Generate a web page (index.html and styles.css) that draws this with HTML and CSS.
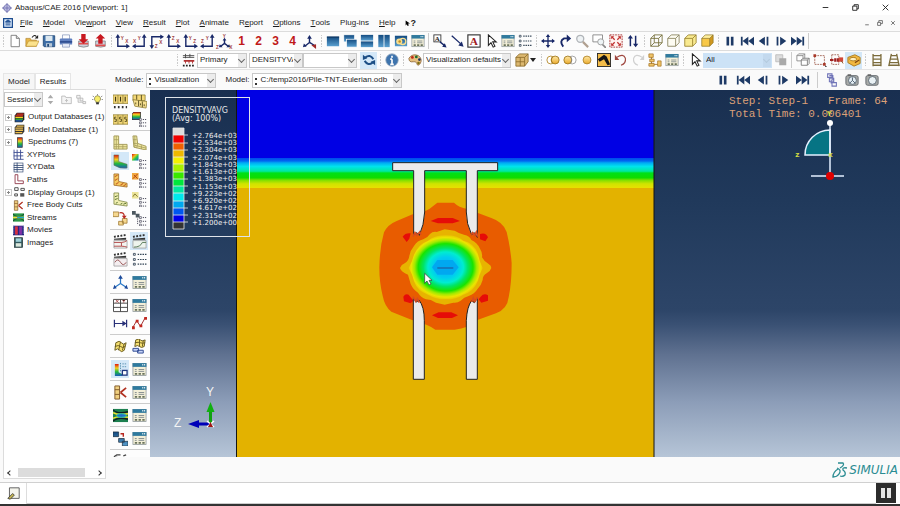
FILE: index.html
```html
<!DOCTYPE html>
<html lang="en">
<head>
<meta charset="utf-8">
<title>Abaqus/CAE 2016 [Viewport: 1]</title>
<link rel="stylesheet" href="styles.css">
</head>
<body>
<svg class="defs" aria-hidden="true">
<defs>
<linearGradient id="win" x1="0" y1="0" x2="0" y2="1"><stop offset="0" stop-color="#124a80"/><stop offset="1" stop-color="#5aa0d0"/></linearGradient>
<linearGradient id="rain" x1="0" y1="0" x2="0" y2="1"><stop offset="0" stop-color="#e01010"/><stop offset=".35" stop-color="#f0d020"/><stop offset=".65" stop-color="#20b840"/><stop offset="1" stop-color="#1858c0"/></linearGradient>
<linearGradient id="rainx" x1="0" y1="0" x2="1" y2="1"><stop offset="0" stop-color="#e01010"/><stop offset=".35" stop-color="#f0c020"/><stop offset=".6" stop-color="#20c850"/><stop offset="1" stop-color="#1868d0"/></linearGradient>
<linearGradient id="gold" x1="0" y1="0" x2="0" y2="1"><stop offset="0" stop-color="#ffe9a8"/><stop offset="1" stop-color="#e9a92a"/></linearGradient>
</defs>
<symbol id="app" viewBox="0 0 16 16"><path d="M8 1l3 3v1h1l3 3-3 3h-1v1l-3 3-3-3v-1H4L1 8l3-3h1V4z" fill="#c8c8e8" stroke="#5a5aa0" stroke-width="1.3"/><path d="M1 8h14M8 1v14" stroke="#7070b0" stroke-width="1.5"/></symbol>
<symbol id="mdi" viewBox="0 0 16 16"><rect x="1" y="1" width="14" height="14" fill="#dceafa" stroke="#1c4c90" stroke-width="2"/><path d="M4 6l4-3 4 3zM4 11h8M4 8h8" fill="#1c4c90" stroke="#1c4c90" stroke-width="1.6"/></symbol>
<symbol id="new" viewBox="0 0 16 16"><path d="M3.500 1.500h6l3.500 3.500v9.500h-9.500z" fill="#fff" stroke="#777"/><path d="M9.500 1.500v3.500h3.500" fill="#ddd" stroke="#777"/></symbol>
<symbol id="open" viewBox="0 0 16 16"><path d="M1 14V5h5l1 2h6v7z" fill="#e8b848" stroke="#a87820" stroke-width=".7"/><path d="M1 14l3-6h12l-3 6z" fill="#fbe28c" stroke="#b88a28" stroke-width=".7"/><path d="M8 4q3-4 5-1" fill="none" stroke="#222" stroke-width="1.200"/><path d="M15 1v4h-4z" fill="#222"/></symbol>
<symbol id="save" viewBox="0 0 16 16"><path d="M1.500 2h13v12.500h-12l-1-1z" fill="#3e6ea6" stroke="#234a78"/><path d="M4 2h8v6H4z" fill="#dce8f0"/><path d="M4.500 10.500h7v4h-7z" fill="#b8c8d8"/><path d="M6 11.500h2v3H6z" fill="#234a78"/></symbol>
<symbol id="print" viewBox="0 0 16 16"><path d="M4 1h8v5H4z" fill="#fff" stroke="#8090b8" stroke-width=".8"/><path d="M1 6q0-1 1-1h12q1 0 1 1v6H1z" fill="#6080c0"/><path d="M1 8h14v2H1z" fill="#304f92"/><path d="M4 11h8v4H4z" fill="#e8ecf8" stroke="#8090b8" stroke-width=".8"/></symbol>
<symbol id="dbin" viewBox="0 0 16 16"><path d="M3 8h11v6q-5 2-11 0z" fill="#ccd2dc" stroke="#777" stroke-width=".8"/><path d="M3 11h11" stroke="#e05050" stroke-width="2"/><path d="M6 0h5v6h3l-5.500 5L3 6h3z" fill="#c81820"/></symbol>
<symbol id="dbout" viewBox="0 0 16 16"><path d="M3 8h11v6q-5 2-11 0z" fill="#ccd2dc" stroke="#777" stroke-width=".8"/><path d="M3 13h11" stroke="#e05050" stroke-width="2"/><path d="M6 11h5V5h3L8.500 0 3 5h3z" fill="#c81820"/></symbol>
<symbol id="w1" viewBox="0 0 16 16"><rect x="1" y="3" width="14" height="11" fill="url(#win)"/><path d="M1 3.500h14" stroke="#0c2f58"/></symbol>
<symbol id="w2" viewBox="0 0 16 16"><rect x="1" y="1" width="12" height="8" fill="url(#win)" stroke="#fff" stroke-width=".6"/><rect x="4" y="6" width="12" height="9" fill="url(#win)" stroke="#fff" stroke-width=".8"/></symbol>
<symbol id="w3" viewBox="0 0 16 16"><rect x="1" y="1" width="14" height="6.500" fill="url(#win)"/><rect x="1" y="8.500" width="14" height="6.500" fill="url(#win)"/></symbol>
<symbol id="w4" viewBox="0 0 16 16"><rect x="1.500" y="1" width="6" height="14" fill="url(#win)"/><rect x="8.500" y="1" width="6" height="14" fill="url(#win)"/></symbol>
<symbol id="w5" viewBox="0 0 16 16"><rect x="1" y="2" width="14" height="12" fill="url(#win)"/><circle cx="6" cy="8.500" r="3.500" fill="#f8df90"/><circle cx="10" cy="8.500" r="3.500" fill="none" stroke="#f8df90" stroke-width="1.500"/><circle cx="6.500" cy="8.500" r="1.500" fill="#c89020"/></symbol>
<symbol id="dlg" viewBox="0 0 16 16"><rect x="1" y="1.500" width="14" height="13" fill="#f3efd8" stroke="#8a9498" stroke-width=".8"/><path d="M.600 1.200h14.800v4H.600z" fill="#2f7a9e"/><path d="M11 3h1M13 3h1" stroke="#fff" stroke-width="1.500"/><path d="M3 8h2M7 8h6M3 10h2M7 10h6" stroke="#858e90" stroke-width="1"/><path d="M3 12.700h2.500M7 12.700h2.500M11 12.700h2.500" stroke="#6a735a" stroke-width="1.800"/></symbol>
<symbol id="arr" viewBox="0 0 16 16"><path d="M2 2l10 9" stroke="#182868" stroke-width="1.500"/><path d="M15.500 14.500l-6-1.500 4-4.500z" fill="#182868"/></symbol>
<symbol id="cur" viewBox="0 0 16 16"><path d="M5 1v12l3-3 2.500 5 2-1-2.500-5h4z" fill="#fff" stroke="#222" stroke-width="1.200"/></symbol>
<symbol id="list" viewBox="0 0 16 16"><path d="M1.500 1.500h2v2h-2zM1.500 7h2v2h-2zM1.500 12h2v2h-2z" fill="#fff" stroke="#345" stroke-width=".9"/><path d="M6 2.500h10M6 8h10M6 13h10" stroke="#345" stroke-width="1.300" stroke-dasharray="1.600 1"/></symbol>
<symbol id="pan" viewBox="0 0 16 16"><path d="M8 2v12M2 8h12" stroke="#182868" stroke-width="1.500"/><path d="M8 0l2.500 3.500h-5zM8 16l2.500-3.500h-5zM0 8l3.500-2.500v5zM16 8l-3.500-2.500v5z" fill="#182868"/></symbol>
<symbol id="rot" viewBox="0 0 16 16"><path d="M6 14.500Q1 8 7 5h4" fill="none" stroke="#182868" stroke-width="2.200"/><path d="M10 .5l5 4.500-5 4.500z" fill="#182868"/></symbol>
<symbol id="mag" viewBox="0 0 16 16"><circle cx="6" cy="5.500" r="4" fill="#eef2f4" stroke="#b0b4b8" stroke-width="1.500"/><path d="M9 9l6 6" stroke="#b0a090" stroke-width="2.500"/></symbol>
<symbol id="zbox" viewBox="0 0 16 16"><path d="M1 1h11v8H1z" fill="#fff" stroke="#777" stroke-width=".9"/><circle cx="10" cy="9" r="3.500" fill="#eef4f6" stroke="#999"/><path d="M12 12l4 4" stroke="#888" stroke-width="2"/></symbol>
<symbol id="fit" viewBox="0 0 16 16"><rect x="1" y="1" width="14" height="14" fill="#fff3f0" stroke="#a02828" stroke-dasharray="2 1"/><path d="M3 3l3.500 3.500M13 3L9.500 6.500M3 13l3.500-3.500M13 13L9.500 9.500" stroke="#c03030" stroke-width="1.500"/><path d="M2.500 2.500h3.500l-3.500 3.500zM13.500 2.500H10l3.500 3.500zM2.500 13.500h3.500L2.500 10zM13.500 13.500H10l3.500-3.500z" fill="#c03030"/></symbol>
<symbol id="updn" viewBox="0 0 16 16"><path d="M5 4v10M11 2v10" stroke="#182868" stroke-width="1.700"/><path d="M2 5l3-4 3 4zM8 11l3 4 3-4z" fill="#182868"/></symbol>
<symbol id="cwire" viewBox="0 0 16 16"><path d="M2 5h9v9H2zM6 1h9v9H6zM2 5l4-4M11 5l4-4M2 14l4-4M11 14l4-4" fill="none" stroke="#76703c"/></symbol>
<symbol id="chid" viewBox="0 0 16 16"><path d="M2 5h9v9H2zM2 5l4-4h9v9l-4 4M11 5l4-4" fill="#fdfcf2" stroke="#8a8560"/></symbol>
<symbol id="cfill" viewBox="0 0 16 16"><path d="M2 5l4-4h9v9l-4 4H2z" fill="#f9ea90"/><path d="M2 5h9v9H2zM2 5l4-4h9v9l-4 4M11 5l4-4" fill="none" stroke="#998430"/></symbol>
<symbol id="cshade" viewBox="0 0 16 16"><path d="M2 5l4-4h9l-4 4z" fill="#fff0a0"/><path d="M2 5h9v9H2z" fill="#f8c848"/><path d="M11 5l4-4v9l-4 4z" fill="#d09820"/><path d="M2 5h9v9H2zM2 5l4-4h9v9l-4 4M11 5l4-4" fill="none" stroke="#8d7420" stroke-width=".8"/></symbol>
<symbol id="pause" viewBox="0 0 16 16"><path d="M4 3h3v10H4zM9 3h3v10H9z" fill="#1e3a66"/></symbol>
<symbol id="first" viewBox="0 0 16 16"><path d="M1 3h2v10H1zM9.500 3v10L3 8zM16 3v10L9.500 8z" fill="#1e3a66"/></symbol>
<symbol id="prev" viewBox="0 0 16 16"><path d="M9 3v10L2 8zM11 3h2v10h-2z" fill="#1e3a66"/></symbol>
<symbol id="next" viewBox="0 0 16 16"><path d="M3 3h2v10H3zM7 3l7 5-7 5z" fill="#1e3a66"/></symbol>
<symbol id="last" viewBox="0 0 16 16"><path d="M13 3h2v10h-2zM0 3l6.500 5L0 13zM6.500 3L13 8l-6.500 5z" fill="#1e3a66"/></symbol>
<symbol id="field" viewBox="0 0 16 16"><path d="M1 3h13M1 5h13" stroke="#444"/><path d="M4 1v5M9 1v4" stroke="#444"/><path d="M2 9h12" stroke="#b03030" stroke-width="2"/><path d="M4 9v3M8 9v3M12 9v3" stroke="#b03030"/><path d="M1 14.500h14" stroke="#222" stroke-width="2" stroke-dasharray="2 1.500"/></symbol>
<symbol id="sync" viewBox="0 0 16 16"><path d="M13 7Q9 1 4 5M3 9q4 6 9 2" fill="none" stroke="#1d4f86" stroke-width="2.300"/><path d="M1 8V2l5 4zM15 8v6l-5-4z" fill="#1d4f86"/></symbol>
<symbol id="info" viewBox="0 0 16 16"><circle cx="8" cy="8" r="7" fill="#3e74ae" stroke="#7892b0"/><path d="M8 3v2.500M8 7v6M6 7h2M6 13h4" stroke="#fff" stroke-width="1.900"/></symbol>
<symbol id="pal" viewBox="0 0 16 16"><path d="M1 6q4-6 11-3 5 4 2 9-3 4-4 0-1-3-4-2Q1 11 1 6z" fill="#e6c080" stroke="#805828" stroke-width=".8"/><circle cx="5" cy="5" r="1.600" fill="#c02818"/><circle cx="9.500" cy="4.500" r="1.600" fill="#1c7030"/><circle cx="13" cy="7.500" r="1.500" fill="#203060"/><circle cx="12" cy="11.500" r="1.500" fill="#807010"/></symbol>
<symbol id="cube" viewBox="0 0 16 16"><path d="M1 5l4-4h10v9l-4 5H1z" fill="#dcb870"/><path d="M1 5h10v10H1zM1 5l4-4h10v9l-4 5M11 5l4-4M6 5v10M1 10h10" fill="none" stroke="#886828" stroke-width=".9"/></symbol>
<symbol id="dg1" viewBox="0 0 16 16"><circle cx="5.500" cy="8" r="4.500" fill="#fff" stroke="#b48828"/><circle cx="10.500" cy="8" r="4.500" fill="url(#gold)" stroke="#a07820"/><path d="M8 4a5 5 0 0 0 0 8" fill="none" stroke="#a07820"/></symbol>
<symbol id="dg2" viewBox="0 0 16 16"><circle cx="10.500" cy="8" r="4.500" fill="#fff" stroke="#999"/><circle cx="5.500" cy="8" r="4.500" fill="url(#gold)" stroke="#a07820"/><path d="M8 4a5 5 0 0 1 0 8" fill="none" stroke="#888"/></symbol>
<symbol id="dg3" viewBox="0 0 16 16"><circle cx="8" cy="8" r="4.500" fill="url(#gold)" stroke="#b08428"/></symbol>
<symbol id="dg4" viewBox="0 0 16 16"><rect x=".5" y=".5" width="15" height="15" fill="#f4bc48" stroke="#222"/><path d="M1 7l7-5 3 2 4 9-3 1-4-7-5 3z" fill="#151515"/></symbol>
<symbol id="undo" viewBox="0 0 16 16"><path d="M3 5q8-5 10 1 1 6-5 8" fill="none" stroke="#a04840" stroke-width="1.300"/><path d="M1 2v6h5z" fill="#a04840"/></symbol>
<symbol id="redo" viewBox="0 0 16 16"><path d="M13 5Q5 0 3 6q-1 6 5 8" fill="none" stroke="#d0d0d0" stroke-width="1.300"/><path d="M15 2v6h-5z" fill="#d0d0d0"/></symbol>
<symbol id="tree" viewBox="0 0 16 16"><path d="M4 3v10h8M4 8h3" fill="none" stroke="#a07020"/><path d="M1 1h5v4H1zM2 7h5v3H2zM1 12h6v3H1zM11 9h4v6h-4z" fill="#f0c468" stroke="#a07020" stroke-width=".8"/></symbol>
<symbol id="grey" viewBox="0 0 16 16"><path d="M2 2h8v8H2z" fill="#ddd" stroke="#bbb"/><path d="M6 6h8v8H6z" fill="#aaa"/></symbol>
<symbol id="cubes" viewBox="0 0 16 16"><path d="M1 3h7v6H1zM1 3l2-2h7v6L8 9M8 3l2-2" fill="#fff" stroke="#888"/><path d="M6 8h7v6H6zM6 8l2-2h7v6l-2 2M13 8l2-2" fill="#fff" stroke="#777"/></symbol>
<symbol id="sel" viewBox="0 0 16 16"><rect x="2" y="3" width="11" height="10" fill="none" stroke="#a06050" stroke-dasharray="2 1"/><path d="M.5 1.500h3v3h-3zM11.500 11.500h3v3h-3z" fill="#a83828"/><path d="M16 16h-2v-2" fill="#222"/></symbol>
<symbol id="sel2" viewBox="0 0 16 16"><rect x="2" y="2" width="8" height="11" fill="none" stroke="#a06050" stroke-dasharray="2 1"/><path d="M0 8h4M6 6v4M9 6v4" stroke="#a02020" stroke-width="2.500"/><path d="M10 5h5v5h-5z" fill="#d04838"/><path d="M13 9l2 3" stroke="#805020"/></symbol>
<symbol id="ring" viewBox="0 0 16 16"><path d="M1 5l8-3 6 3v7l-7 3-7-4z" fill="#f1b840" stroke="#a87818"/><ellipse cx="7" cy="7" rx="4" ry="2" fill="#fff0c0" stroke="#a87818"/><path d="M9 11l5-3" stroke="#804810" stroke-width="1.500"/></symbol>
<symbol id="lad" viewBox="0 0 16 16"><path d="M3.500 1v14M12.500 1v14M3 3h10M3 7h10M3 11h10M3 14h10" stroke="#7c6c3c" stroke-width="1.500"/></symbol>
<symbol id="lad2" viewBox="0 0 16 16"><path d="M5 1L2 15M11 1l3 14M5 3h6M4 7h8M3 11h10M2 14h12" stroke="#7c6c3c" stroke-width="1.500"/></symbol>
<symbol id="link" viewBox="0 0 16 16"><path d="M3 1h5v4H3zM5 6h5v4H5zM8 11h5v4H8zM5 3h4v5H7v4" fill="none" stroke="#7074b8" stroke-width="1.200"/></symbol>
<symbol id="cam" viewBox="0 0 16 16"><rect x="1" y="3" width="14" height="11" rx="2" fill="#a8aaa8" stroke="#5c6268"/><path d="M3 1.500h4V3H3z" fill="#555"/><circle cx="8.500" cy="8.500" r="4.500" fill="#e4eef4" stroke="#52606c"/><path d="M8.500 5v3.500l-3 3M8.500 8.500l3 3" stroke="#456" fill="none"/></symbol>
<symbol id="cam2" viewBox="0 0 16 16"><rect x="1" y="3" width="14" height="11" rx="2" fill="#a8aaa8" stroke="#5c6268"/><path d="M3 1.500h4V3H3z" fill="#555"/><circle cx="8.500" cy="8.500" r="4.500" fill="#e9f1f4" stroke="#52606c"/></symbol>
<symbol id="fold" viewBox="0 0 16 16"><path d="M1 3h5l1 2h8v9H1z" fill="#f4f4f4" stroke="#aaa"/><path d="M8 12V8l-2 2M8 8l2 2" fill="none" stroke="#aaa"/></symbol>
<symbol id="tgrey" viewBox="0 0 16 16"><path d="M1 2h5v4H1zM6 6h4v4H6zM10 11h4v3h-4zM3 6v6h7" fill="#f4f4f4" stroke="#aaa"/></symbol>
<symbol id="bulb" viewBox="0 0 16 16"><path d="M8 0v2M1 3l2 1M15 3l-2 1M0 8h2M16 8h-2" stroke="#666"/><path d="M8 2.500a4.500 4.500 0 0 1 2.500 8.200V12h-5v-1.300A4.500 4.500 0 0 1 8 2.500z" fill="#f7ee6c" stroke="#77703a"/><path d="M6 12h4v3H6z" fill="#333"/></symbol>
<symbol id="odb" viewBox="0 0 16 16"><path d="M1 5l3-4h11v10l-3 4H1z" fill="#222"/><path d="M4 3h10M2 5.500h11" stroke="#e03020" stroke-width="1.800"/><path d="M2 8h11" stroke="#f0d820" stroke-width="1.800"/><path d="M2 10.500h11" stroke="#30b840" stroke-width="1.800"/><path d="M2 13h10" stroke="#2070d8" stroke-width="1.600"/></symbol>
<symbol id="mdb" viewBox="0 0 16 16"><path d="M1 5l3-4h11v10l-3 4H1z" fill="#333"/><path d="M4 3h10M2 6h11M2 9h11M2 12.500h10" stroke="#f0c050" stroke-width="2"/></symbol>
<symbol id="spec" viewBox="0 0 16 16"><rect x="5" y="1" width="7" height="14" fill="url(#rain)" stroke="#333"/></symbol>
<symbol id="xyp" viewBox="0 0 16 16"><path d="M1.500 1v14h14M6 1v14M11 1v14M1 5h14M1 10h14" fill="none" stroke="#3a4a90" stroke-width="1.300"/></symbol>
<symbol id="xyd" viewBox="0 0 16 16"><rect x="1.500" y="1.500" width="13" height="13" fill="#fff" stroke="#3a5078"/><path d="M1 5h14M1 8h14M1 11h14M6 1v14" stroke="#3a5078" stroke-width="1.300"/></symbol>
<symbol id="path" viewBox="0 0 16 16"><path d="M3 1h4v9h8v4H3z" fill="#fff" stroke="#903848" stroke-width="1.300"/></symbol>
<symbol id="dgr" viewBox="0 0 16 16"><path d="M1 1h5v4H1zM10 2h5v3h-5zM1 10h4v3H1z" fill="#fff" stroke="#444" stroke-width="1.300"/><path d="M9 9h6v5H9z" fill="#555"/></symbol>
<symbol id="fbc" viewBox="0 0 16 16"><path d="M2 1h5v14H2zM2 5h5M2 10h5" fill="#f0d080" stroke="#805828"/><path d="M8 8l6-5M8 8l6 5" stroke="#b03020" stroke-width="1.800"/></symbol>
<symbol id="strm" viewBox="0 0 16 16"><rect y="2" width="16" height="12" fill="#2b9a48"/><path d="M0 3q8 8 16 0M0 13q8-8 16 0" fill="none" stroke="#153c2a" stroke-width="1.200"/><path d="M0 8h16" stroke="#f2e040" stroke-width="2.500"/><path d="M6 8h10" stroke="#20a8c8" stroke-width="2"/></symbol>
<symbol id="mov" viewBox="0 0 16 16"><rect y="1" width="16" height="14" fill="#262680"/><path d="M3 2h4v12H3z" fill="#d83040"/><path d="M9 2h4v12H9z" fill="#8030a8"/><path d="M1 2v12M15 2v12" stroke="#fff" stroke-dasharray="1.500 1.500"/></symbol>
<symbol id="img" viewBox="0 0 16 16"><rect x="2" y="1" width="12" height="14" fill="#345a60" stroke="#233"/><path d="M4 2h8v5H4z" fill="#9fd0d8"/><path d="M4 9h8v5H4z" fill="#dce8dc"/></symbol>
<symbol id="n3" viewBox="0 0 16 16"><path d="M0 1h16v9H0zM5.300 1v9M10.600 1v9" fill="#f4d878" stroke="#8a7a30" stroke-width=".8"/><path d="M2.700 3v5M8 3v5M13 3v5" stroke="#403810" stroke-width="1.200"/><path d="M1 14h14" stroke="#333" stroke-width="2.200" stroke-dasharray="1.800 2.400"/></symbol>
<symbol id="n3b" viewBox="0 0 16 16"><path d="M1 1h13v6H1z" fill="#f4d878" stroke="#8a7a30" stroke-width=".8"/><path d="M1 6l15 2-1 7-12-2z" fill="#f6df90" stroke="#8a7a30" stroke-width=".8"/><path d="M5 1v5M10 1v6M7 7v6M11 8v6M4 9v2M9 10v2M13 11v2" stroke="#5a5020" stroke-width="1"/></symbol>
<symbol id="n3c" viewBox="0 0 16 16"><path d="M0 3h16v10H0zM5.300 3v10M10.600 3v10" fill="#f4d878" stroke="#8a7a30" stroke-width=".8"/><path d="M3.500 5.500h-2v2h2v2.500h-2M9 5.500H7v2h2v2.500H7M14.500 5.500h-2v2h2v2.500h-2" fill="none" stroke="#5a5020"/></symbol>
<symbol id="odbl" viewBox="0 0 16 16"><path d="M0 2l2-2h7v6L8 8H0z" fill="url(#rain)" stroke="#222" stroke-width=".8"/><path d="M8 7h2v2H8zM8 10.500h2v2H8zM8 14h2v2H8z" fill="#fff" stroke="#445" stroke-width=".7"/><path d="M11.500 8H16M11.500 11.500H16M11.500 15H16" stroke="#445" stroke-dasharray="1.300 1"/></symbol>
<symbol id="lsh" viewBox="0 0 16 16"><path d="M1 1h5v9h9v5H1z" fill="#efe7a0" stroke="#a39a58"/><path d="M1 5h5M1 10h5v5M3.500 1v14M10.500 10v5M1 12.500h14" fill="none" stroke="#a39a58" stroke-width=".8"/></symbol>
<symbol id="ldef" viewBox="0 0 16 16"><path d="M1 1h4l1 8 9 3v4L2 13z" fill="#efe7a0" stroke="#a39a58"/><path d="M1 5h4M2 9h4l-1 5M3 1v12M10 11v4M3 11l12 3" fill="none" stroke="#a39a58" stroke-width=".8"/></symbol>
<symbol id="lcon" viewBox="0 0 16 16"><path d="M1 1h5v7l9 3v4q-8 1-14-3z" fill="url(#rain)" stroke="#6b7450" stroke-width=".6"/></symbol>
<symbol id="lcl" viewBox="0 0 16 16"><path d="M0 0h7v7H0z" fill="url(#rainx)"/><path d="M8 6h2v2H8zM8 10h2v2H8zM8 14h2v2H8z" fill="#fff" stroke="#445" stroke-width=".7"/><path d="M11.500 7H16M11.500 11H16M11.500 15H16" stroke="#445" stroke-dasharray="1.300 1"/></symbol>
<symbol id="lsym" viewBox="0 0 16 16"><path d="M1 1h5v8l9 2v4L1 13z" fill="#f6cb60" stroke="#98601c" stroke-width=".8"/><path d="M2 4l3-2M2 8l3-2M3 12l3-2M8 13l3-2M11 14l3-2" stroke="#c86828" stroke-width="1.200"/></symbol>
<symbol id="lsyl" viewBox="0 0 16 16"><path d="M0 0h7v7H0z" fill="#f0a840"/><path d="M2 2l4 4M6 1L1 6" stroke="#b04010"/><path d="M8 6h2v2H8zM8 10h2v2H8zM8 14h2v2H8z" fill="#fff" stroke="#445" stroke-width=".7"/><path d="M11.500 7H16M11.500 11H16M11.500 15H16" stroke="#445" stroke-dasharray="1.300 1"/></symbol>
<symbol id="lmat" viewBox="0 0 16 16"><path d="M1 1h5v8l9 2v4L1 13z" fill="#f0eeb0" stroke="#77803c" stroke-width=".8"/><path d="M2 5l3-1M2 8l3-1M3 12l2-1M8 13l2-1M11 13l3-1" stroke="#55702c"/></symbol>
<symbol id="lmal" viewBox="0 0 16 16"><path d="M0 0h7v7H0z" fill="#ece49a"/><path d="M1 5l2-3 3 3" fill="none" stroke="#807830"/><path d="M8 6h2v2H8zM8 10h2v2H8zM8 14h2v2H8z" fill="#fff" stroke="#445" stroke-width=".7"/><path d="M11.500 7H16M11.500 11H16M11.500 15H16" stroke="#445" stroke-dasharray="1.300 1"/></symbol>
<symbol id="ovl" viewBox="0 0 16 16"><path d="M0 1h6v5H0zM6 11h5v4H6zM10 8h5v5h-5z" fill="#f6d890" stroke="#9a7430" stroke-width=".8"/><path d="M7 2q5-1 5 4" fill="none" stroke="#b82820" stroke-width="1.300"/><path d="M9.500 5h5L12 8.500z" fill="#b82820"/></symbol>
<symbol id="ovll" viewBox="0 0 16 16"><path d="M0 0h4v3h4v4H4V4H0z" fill="#4c5860"/><path d="M8 6h2v2H8zM8 10h2v2H8zM8 14h2v2H8z" fill="#fff" stroke="#445" stroke-width=".7"/><path d="M11.500 7H16M11.500 11H16M11.500 15H16M6 8v7" stroke="#445" stroke-dasharray="1.300 1"/></symbol>
<symbol id="an1" viewBox="0 0 16 16"><path d="M1 5l13-1v2H1z" fill="#333"/><path d="M1 3l13-2" stroke="#333" stroke-width="2" stroke-dasharray="2 1.500"/><path d="M1 7h14v8H1z" fill="#f4f4f0" stroke="#999" stroke-width=".8"/><path d="M1 9h8q3 0 6-2M1 13h8q3 0 6 1M9 9v4" fill="none" stroke="#b04848"/></symbol>
<symbol id="an2" viewBox="0 0 16 16"><path d="M1 5l13-1v2H1z" fill="#333"/><path d="M1 3l13-2" stroke="#333" stroke-width="2" stroke-dasharray="2 1.500"/><path d="M1 7h14v8H1z" fill="#eef4ee" stroke="#999" stroke-width=".8"/><path d="M2 14q7 0 9-5h4" fill="none" stroke="#575"/></symbol>
<symbol id="an3" viewBox="0 0 16 16"><path d="M1 5l13-1v2H1z" fill="#333"/><path d="M1 3l13-2" stroke="#333" stroke-width="2" stroke-dasharray="2 1.500"/><path d="M1 7h14v8H1z" fill="#f4eef0" stroke="#999" stroke-width=".8"/><path d="M2 11q3-5 6 0t6 0" fill="none" stroke="#955"/></symbol>
<symbol id="tri" viewBox="0 0 16 16"><path d="M8 3v6l-6 4M8 9l6 4" stroke="#2878c8" stroke-width="1.300" fill="none"/><path d="M8 0l2.500 4h-5zM0 15l1.500-4.500L4 14zM16 15l-1.500-4.500L12 14z" fill="#1c4898"/></symbol>
<symbol id="xyt" viewBox="0 0 16 16"><path d="M.5 1.500h15v13H.5zM.5 5.500h15M.5 10h15M8 1.500v13" fill="#fff" stroke="#444"/><path d="M3 2l3 3M6 2L3 5M10 2l1.500 1.500L13 2M11.500 3.500V5" stroke="#a03030" stroke-width=".8"/></symbol>
<symbol id="len" viewBox="0 0 16 16"><path d="M1.500 4v8M1 8h13M14.500 4v8" stroke="#283078" stroke-width="1.300"/><path d="M10 5l4.500 3-4.500 3z" fill="#283078"/></symbol>
<symbol id="zig" viewBox="0 0 16 16"><path d="M1 12l4-7 4 6 5-9" fill="none" stroke="#a02828"/><path d="M0 11h3v3H0zM4 4h3v3H4zM8 9h3v3H8zM13 1h3v3h-3z" fill="#c02820"/></symbol>
<symbol id="yel" viewBox="0 0 16 16"><path d="M3 4q4-3 6 0t5 0l-2 8q-3 3-5 0t-5 0z" fill="#f6e070" stroke="#66591c"/><path d="M8 3L6 12M12 5l-2 7M2 8q4-2 6 0t5 0" fill="none" stroke="#66591c"/></symbol>
<symbol id="yel2" viewBox="0 0 16 16"><path d="M4 1q4-2 5 0t5 0l-1 7q-3 2-5 0t-5 0z" fill="#f6e070" stroke="#66591c"/><path d="M8 1v7M12 2l-1 6M3 4q4-1 6 0t5 0" fill="none" stroke="#66591c"/><path d="M1 10h6v3H1zM6 12h6v3H6z" fill="#c8d4f8" stroke="#2c4890"/></symbol>
<symbol id="cut" viewBox="0 0 16 16"><path d="M2 2h4v9l4 2v2H2z" fill="url(#rain)"/><path d="M8 1v10M10 2h5M10 5h5" stroke="#5890b0" stroke-dasharray="1.500 1"/><rect x="10" y="9" width="5" height="5" fill="#fff" stroke="#203880" stroke-width="1.400"/></symbol>
<symbol id="stl" viewBox="0 0 16 16"><rect y="1" width="16" height="14" fill="#1d8050"/><path d="M0 2q5 5 16 2M0 14q5-5 16-2" fill="none" stroke="#102020" stroke-width="1.500"/><path d="M0 5q5 3 16 1M0 11q5-3 16-1" fill="none" stroke="#f0e030" stroke-width="1.600"/><ellipse cx="9" cy="8" rx="5" ry="2" fill="#2070c8" stroke="#30c8b0"/></symbol>
<symbol id="lay" viewBox="0 0 16 16"><path d="M0 1h6v5H0zM6 8h6v4H6zM10 11h6v5h-6z" fill="url(#win)" stroke="#234" stroke-width=".8"/><path d="M8 3h3v3" fill="none" stroke="#b82820" stroke-width="1.500"/></symbol>
<symbol id="bit" viewBox="0 0 16 16"><path d="M1 3l3-2h4M4 3v2M11 2l3-1" stroke="#444" fill="none" stroke-width="1.300"/></symbol>
<symbol id="note" viewBox="0 0 16 16"><path d="M3 1h12v13H3z" fill="#f4f4ec" stroke="#444"/><path d="M1 14l6-6 2 2-5 5z" fill="#c8b850" stroke="#333"/></symbol>
</svg>

<header class="titlebar">
  <svg class="i10"><use href="#app"/></svg>
  <h1>Abaqus/CAE 2016 [Viewport: 1]</h1>
  <div class="winctl">
    <button aria-label="Minimize"><svg viewBox="0 0 10 10"><path d="M1 5h8"/></svg></button>
    <button aria-label="Restore"><svg viewBox="0 0 10 10"><path d="M1 3h6v6H1zM3 3V1h6v6H7"/></svg></button>
    <button aria-label="Close"><svg viewBox="0 0 10 10"><path d="M1 1l8 8M9 1L1 9"/></svg></button>
  </div>
</header>

<nav class="menubar">
  <svg class="i10"><use href="#mdi"/></svg>
  <button><u>F</u>ile</button><button><u>M</u>odel</button><button>Vie<u>w</u>port</button><button><u>V</u>iew</button><button><u>R</u>esult</button><button><u>P</u>lot</button><button><u>A</u>nimate</button><button>R<u>e</u>port</button><button><u>O</u>ptions</button><button><u>T</u>ools</button><button>Plu<u>g</u>-ins</button><button><u>H</u>elp</button>
  <button class="what" aria-label="Context help"><svg viewBox="0 0 8 10"><path d="M1 0v8l2-2 1 3 2-1-1-3h3z"/></svg>?</button>
  <div class="winctl small">
    <button aria-label="Minimize viewport"><svg viewBox="0 0 10 10"><path d="M2 8h6"/></svg></button>
    <button aria-label="Restore viewport"><svg viewBox="0 0 10 10"><path d="M1 4h5v5H1zM3 4V1h6v5H6"/></svg></button>
    <button aria-label="Close viewport"><svg viewBox="0 0 10 10"><path d="M2 2l6 6M8 2L2 8"/></svg></button>
  </div>
</nav>

<div class="bar bar-main" role="toolbar" aria-label="Main tools">
  <i class="grip"></i>
  <div class="group"><button aria-label="New"><svg><use href="#new"/></svg></button><button aria-label="Open"><svg><use href="#open"/></svg></button><button aria-label="Save"><svg><use href="#save"/></svg></button><button aria-label="Print"><svg><use href="#print"/></svg></button><button aria-label="Import"><svg><use href="#dbin"/></svg></button><button aria-label="Export"><svg><use href="#dbout"/></svg></button></div>
  <i class="grip"></i>
  <div class="group views">
    <button aria-label="Front"><svg viewBox="0 0 16 16"><path d="M3 3v10h10" class="ax"/><path d="M.5 4L3 0l2.500 4zM12 10.500l4 2.500-4 2.500z" class="axf"/><text x="6" y="6" class="axt">Y</text><text x="11" y="10" class="axt">X</text></svg></button>
    <button aria-label="Back"><svg viewBox="0 0 16 16"><path d="M13 3v10H3" class="ax"/><path d="M10.500 4L13 0l2.500 4zM4 10.500L0 13l4 2.500z" class="axf"/><text x="6" y="6" class="axt">Y</text><text x="1" y="10" class="axt">X</text></svg></button>
    <button aria-label="Top"><svg viewBox="0 0 16 16"><path d="M3 13V3h10" class="ax"/><path d="M.5 12L3 16l2.500-4zM12 .5l4 2.500-4 2.500z" class="axf"/><text x="11" y="11" class="axt">X</text><text x="6" y="15" class="axt">Z</text></svg></button>
    <button aria-label="Bottom"><svg viewBox="0 0 16 16"><path d="M3 3v10h10" class="ax"/><path d="M.5 4L3 0l2.500 4zM12 10.500l4 2.500-4 2.500z" class="axf"/><text x="6" y="6" class="axt">Z</text><text x="11" y="10" class="axt">X</text></svg></button>
    <button aria-label="Left"><svg viewBox="0 0 16 16"><path d="M3 3v10h10" class="ax"/><path d="M.5 4L3 0l2.500 4zM12 10.500l4 2.500-4 2.500z" class="axf"/><text x="6" y="6" class="axt">Y</text><text x="11" y="10" class="axt">Z</text></svg></button>
    <button aria-label="Right"><svg viewBox="0 0 16 16"><path d="M13 3v10H3" class="ax"/><path d="M10.500 4L13 0l2.500 4zM4 10.500L0 13l4 2.500z" class="axf"/><text x="6" y="6" class="axt">Y</text><text x="1" y="10" class="axt">Z</text></svg></button>
    <button aria-label="Isometric"><svg viewBox="0 0 16 16"><path d="M8 6v4l-4 3M8 10l4 3" class="ax"/><path d="M6 7l2-3 2 3zM2 14l1-3 3 3zM14 14l-1-3-3 3z" class="axf"/><text x="6" y="4" class="axt">Y</text><text x="13" y="16" class="axt">X</text><text x="-1" y="16" class="axt">Z</text></svg></button>
    <button class="num">1</button><button class="num">2</button><button class="num">3</button><button class="num">4</button>
    <button aria-label="Save view"><svg viewBox="0 0 16 16"><path d="M8 4v5l-5 4M8 9l5 3" class="ax"/><path d="M5.500 5l2.500-4 2.500 4zM1 14l1-4 3 3z" class="axf"/><path d="M10 12l5-1v5z" fill="#a02828"/></svg></button>
  </div>
  <i class="grip"></i>
  <div class="group"><button aria-label="Create viewport"><svg><use href="#w1"/></svg></button><button aria-label="Cascade"><svg><use href="#w2"/></svg></button><button aria-label="Tile horizontally"><svg><use href="#w3"/></svg></button><button aria-label="Tile vertically"><svg><use href="#w4"/></svg></button><button aria-label="Linked viewports"><svg><use href="#w5"/></svg></button><button aria-label="Viewport options"><svg><use href="#dlg"/></svg></button></div>
  <i class="rule"></i>
  <div class="group">
    <button aria-label="Annotation"><svg viewBox="0 0 16 16"><rect x="1" y="1" width="8" height="8" fill="#fff" stroke="#333"/><text x="2" y="8" class="la">A</text><path d="M8 9l5 4" stroke="#182868" stroke-width="1.500"/><path d="M15.500 15.500l-5-1 3-4z" fill="#182868"/></svg></button>
    <button aria-label="Arrow"><svg><use href="#arr"/></svg></button>
    <button aria-label="Text"><svg viewBox="0 0 16 16"><rect x="1" y="1" width="14" height="14" fill="#fff" stroke="#333" stroke-width="1.300"/><text x="3" y="13" class="lb">A</text></svg></button>
    <button aria-label="Select annotation"><svg><use href="#cur"/></svg></button><button aria-label="Annotation manager"><svg><use href="#dlg"/></svg></button><button aria-label="Annotation list"><svg><use href="#list"/></svg></button>
  </div>
  <i class="grip"></i>
  <div class="group"><button aria-label="Pan"><svg><use href="#pan"/></svg></button><button aria-label="Rotate"><svg><use href="#rot"/></svg></button><button aria-label="Magnify"><svg><use href="#mag"/></svg></button><button aria-label="Box zoom"><svg><use href="#zbox"/></svg></button><button aria-label="Fit"><svg><use href="#fit"/></svg></button><button aria-label="Cycle views"><svg><use href="#updn"/></svg></button></div>
  <i class="grip"></i>
  <div class="group"><button aria-label="Wireframe"><svg><use href="#cwire"/></svg></button><button aria-label="Hidden"><svg><use href="#chid"/></svg></button><button aria-label="Filled"><svg><use href="#cfill"/></svg></button><button aria-label="Shaded"><svg><use href="#cshade"/></svg></button></div>
  <i class="grip"></i>
  <div class="group"><button aria-label="Pause"><svg><use href="#pause"/></svg></button><button aria-label="First"><svg><use href="#first"/></svg></button><button aria-label="Previous"><svg><use href="#prev"/></svg></button><button aria-label="Next"><svg><use href="#next"/></svg></button><button aria-label="Last"><svg><use href="#last"/></svg></button></div>
  <i class="rule"></i>
</div>

<div class="bar bar-field" role="toolbar" aria-label="Field output">
  <i class="grip"></i>
  <div class="group"><button aria-label="Field output"><svg><use href="#field"/></svg></button></div>
  <label class="combo c-primary"><select aria-label="Variable position"><option>Primary</option></select></label>
  <label class="combo c-var"><select aria-label="Variable"><option>DENSITYVAVG</option></select></label>
  <label class="combo c-comp"><select aria-label="Component"><option></option></select></label>
  <div class="group"><button class="on" aria-label="Sync"><svg><use href="#sync"/></svg></button></div>
  <i class="grip"></i>
  <div class="group"><button aria-label="Query"><svg><use href="#info"/></svg></button></div>
  <i class="grip"></i>
  <div class="group"><button aria-label="Color code"><svg><use href="#pal"/></svg></button></div>
  <label class="combo c-vis"><select aria-label="Color mapping"><option>Visualization defaults</option></select></label>
  <div class="group"><button aria-label="Translucency"><svg><use href="#cube"/></svg></button></div>
  <i class="caret"></i>
  <i class="grip"></i>
  <div class="group"><button aria-label="Replace"><svg><use href="#dg1"/></svg></button><button aria-label="Remove"><svg><use href="#dg2"/></svg></button><button aria-label="Either"><svg><use href="#dg3"/></svg></button><button aria-label="Replace all"><svg><use href="#dg4"/></svg></button><button aria-label="Undo"><svg><use href="#undo"/></svg></button><button aria-label="Redo"><svg><use href="#redo"/></svg></button><button aria-label="Create group"><svg><use href="#tree"/></svg></button><button aria-label="Group manager"><svg><use href="#dlg"/></svg></button></div>
  <i class="grip"></i>
  <div class="group"><button aria-label="Select"><svg><use href="#cur"/></svg></button></div>
  <label class="combo c-all"><select aria-label="Selection filter"><option>All</option></select></label>
  <div class="group"><button aria-label="Selection options"><svg><use href="#grey"/></svg></button></div>
  <i class="rule"></i>
  <div class="group"><button aria-label="Inside"><svg><use href="#cubes"/></svg></button><button aria-label="Drag shape"><svg><use href="#sel"/></svg></button><button aria-label="Drag scope"><svg><use href="#sel2"/></svg></button><button class="on" aria-label="Highlight"><svg><use href="#ring"/></svg></button></div>
  <i class="grip"></i>
  <div class="group"><button aria-label="Parallel"><svg><use href="#lad"/></svg></button><button aria-label="Perspective"><svg><use href="#lad2"/></svg></button></div>
</div>

<main>
  <aside class="side">
    <div class="tabs" role="tablist"><button role="tab">Model</button><button role="tab" aria-selected="true">Results</button></div>
    <section class="panel">
      <div class="panel-tools">
        <label class="combo c-ses"><select aria-label="Session data"><option>Session Data</option></select></label>
        <button aria-label="Move"><svg viewBox="0 0 16 16"><path d="M4 6l4-5 4 5zM4 10l4 5 4-5z" fill="#aaa"/></svg></button><button aria-label="Up folder"><svg><use href="#fold"/></svg></button><button aria-label="Expand"><svg><use href="#tgrey"/></svg></button><button aria-label="Tips"><svg><use href="#bulb"/></svg></button>
      </div>
      <ul class="tree">
        <li class="exp"><svg><use href="#odb"/></svg>Output Databases (1)</li>
        <li class="exp"><svg><use href="#mdb"/></svg>Model Database (1)</li>
        <li class="exp"><svg><use href="#spec"/></svg>Spectrums (7)</li>
        <li><svg><use href="#xyp"/></svg>XYPlots</li>
        <li><svg><use href="#xyd"/></svg>XYData</li>
        <li><svg><use href="#path"/></svg>Paths</li>
        <li class="exp"><svg><use href="#dgr"/></svg>Display Groups (1)</li>
        <li><svg><use href="#fbc"/></svg>Free Body Cuts</li>
        <li><svg><use href="#strm"/></svg>Streams</li>
        <li><svg><use href="#mov"/></svg>Movies</li>
        <li><svg><use href="#img"/></svg>Images</li>
      </ul>
      <div class="hscroll"><i class="chev left"></i><span class="thumb"></span><i class="chev right"></i></div>
    </section>
  </aside>

  <section class="work">
    <div class="context">
      <label for="module">Module:</label>
      <span class="combo spin c-module"><select id="module"><option>Visualization</option></select></span>
      <label for="model">Model:</label>
      <span class="combo spin c-model"><select id="model"><option>C:/temp2016/Pile-TNT-Eulerian.odb</option></select></span>
      <div class="play">
        <button aria-label="Pause animation"><svg><use href="#pause"/></svg></button><button aria-label="First frame"><svg><use href="#first"/></svg></button><button aria-label="Previous frame"><svg><use href="#prev"/></svg></button><button aria-label="Next frame"><svg><use href="#next"/></svg></button><button aria-label="Last frame"><svg><use href="#last"/></svg></button>
        <i class="rule"></i>
        <button aria-label="Link"><svg><use href="#link"/></svg></button><button aria-label="Save view image"><svg><use href="#cam"/></svg></button><button aria-label="Snapshot"><svg><use href="#cam2"/></svg></button>
      </div>
    </div>

    <div class="stage">
      <div class="toolbox" role="toolbar" aria-label="Visualization toolbox">
        <div class="tools"><button aria-label="Frames"><svg><use href="#n3"/></svg></button><button aria-label="Step frames"><svg><use href="#n3b"/></svg></button><button aria-label="Frame selector"><svg><use href="#n3c"/></svg></button><button aria-label="Result options"><svg><use href="#odbl"/></svg></button></div>
        <div class="tools plots"><button aria-label="Undeformed"><svg><use href="#lsh"/></svg></button><button aria-label="Deformed"><svg><use href="#ldef"/></svg></button><button class="on" aria-label="Contours"><svg><use href="#lcon"/></svg></button><button aria-label="Contour options"><svg><use href="#lcl"/></svg></button><button aria-label="Symbols"><svg><use href="#lsym"/></svg></button><button aria-label="Symbol options"><svg><use href="#lsyl"/></svg></button><button aria-label="Orientations"><svg><use href="#lmat"/></svg></button><button aria-label="Orientation options"><svg><use href="#lmal"/></svg></button><button aria-label="Superimpose"><svg><use href="#ovl"/></svg></button><button aria-label="Superimpose options"><svg><use href="#ovll"/></svg></button></div>
        <div class="tools"><button aria-label="Animate scale factor"><svg><use href="#an1"/></svg></button><button class="on" aria-label="Animate time history"><svg><use href="#an2"/></svg></button><button aria-label="Animate harmonic"><svg><use href="#an3"/></svg></button><button aria-label="Animation options"><svg><use href="#list"/></svg></button></div>
        <div class="tools"><button aria-label="Coordinate system"><svg><use href="#tri"/></svg></button><button aria-label="Coordinate system manager"><svg><use href="#dlg"/></svg></button></div>
        <div class="tools"><button aria-label="XY data"><svg><use href="#xyt"/></svg></button><button aria-label="XY data manager"><svg><use href="#dlg"/></svg></button><button aria-label="XY axis options"><svg><use href="#len"/></svg></button><button aria-label="XY curve options"><svg><use href="#zig"/></svg></button></div>
        <div class="tools"><button aria-label="Ply stack"><svg><use href="#yel"/></svg></button><button aria-label="Ply options"><svg><use href="#yel2"/></svg></button></div>
        <div class="tools"><button class="on" aria-label="View cut"><svg><use href="#cut"/></svg></button><button aria-label="View cut manager"><svg><use href="#dlg"/></svg></button></div>
        <div class="tools"><button aria-label="Free body"><svg><use href="#fbc"/></svg></button><button aria-label="Free body manager"><svg><use href="#dlg"/></svg></button></div>
        <div class="tools"><button aria-label="Stream"><svg><use href="#stl"/></svg></button><button aria-label="Stream manager"><svg><use href="#dlg"/></svg></button></div>
        <div class="tools"><button aria-label="Overlay"><svg><use href="#lay"/></svg></button><button aria-label="Overlay manager"><svg><use href="#dlg"/></svg></button></div>
        <div class="tools"><button aria-label="Stream toggle"><svg><use href="#bit"/></svg></button></div>
      </div>

      <svg class="viewport" viewBox="150 90 750 367" preserveAspectRatio="xMidYMid slice" role="img" aria-label="Density contour plot">
        <defs>
          <linearGradient id="sky" x1="0" y1="0" x2="0" y2="1"><stop offset="0" stop-color="#192f50"/><stop offset=".3" stop-color="#20395b"/><stop offset=".6" stop-color="#2d4568"/><stop offset=".64" stop-color="#3a5174"/><stop offset=".72" stop-color="#5f7190"/><stop offset=".85" stop-color="#8c9db8"/><stop offset="1" stop-color="#b6c5d7"/></linearGradient>
          <linearGradient id="band" x1="0" y1="158" x2="0" y2="188" gradientUnits="userSpaceOnUse"><stop offset="0" stop-color="#0048ec"/><stop offset=".1" stop-color="#0068f0"/><stop offset=".16" stop-color="#00a8f4"/><stop offset=".28" stop-color="#00e4ec"/><stop offset=".44" stop-color="#00e8a0"/><stop offset=".5" stop-color="#00e018"/><stop offset=".66" stop-color="#10dc00"/><stop offset=".74" stop-color="#80e000"/><stop offset=".86" stop-color="#d0e400"/><stop offset="1" stop-color="#e8e000"/></linearGradient>
          <radialGradient id="core"><stop offset="0" stop-color="#00b4f0"/><stop offset=".32" stop-color="#00ccf0"/><stop offset=".48" stop-color="#00ecd0"/><stop offset=".6" stop-color="#00e468"/><stop offset=".74" stop-color="#18e400"/><stop offset=".84" stop-color="#a0ea00"/><stop offset=".93" stop-color="#ece400"/><stop offset="1" stop-color="#e9c800"/></radialGradient>
        </defs>
        <rect x="150" y="90" width="750" height="367" fill="url(#sky)"/>
        <rect x="237" y="90" width="417" height="68" fill="#0000e4"/>
        <rect x="237" y="158" width="417" height="30" fill="url(#band)"/>
        <rect x="237" y="188" width="417" height="269" fill="#e3b200"/>
        <path d="M236.500 90v367M654 90v367" stroke="#151510"/>
        <g transform="translate(360 140) scale(.3333)">
          <path d="M232 188h50q14 14 40 19l72 27q36 12 46 42 12 50 15 94 0 60-9 102-4 36-38 48l-62 22q-20 22-62 27h-58q-16-14-72-30l-60-24q-20-16-26-48-10-40-10-84 1-60 14-106 12-24 38-34l48-20q34-6 50-16z" fill="#e85c00"/>
          <path d="M120 384q4-10 14-14 12-6 14-22 2-16 14-30 10-16 28-20 14-6 20-16 8-8 20-6l24-8 30 4q16 10 28 12 18 4 22 16 18 8 26 26 8 12 6 26 6 12 20 20 8 4 8 12-4 12-14 16-12 6-12 20-4 16-16 28-8 14-26 20-14 4-24 14-10 8-22 6l-26 6-26-6q-16-10-30-10-16-6-24-20-14-8-22-26-4-14-8-28-20-8-24-20z" fill="#e7b400"/>
          <path d="M146 384q12-22 16-40 14-32 42-42 20-16 54-16t52 16q34 8 44 40 4 22 14 42-10 20-14 38-14 34-44 42-20 14-52 14t-54-14q-32-10-42-40-4-20-16-40z" fill="url(#core)"/>
          <path d="M216 382l16-22h46l18 22-18 22h-46z" fill="#00a8f0"/><path d="M232 384h48" stroke="#234e90" stroke-width="3"/>
          <path d="M212 243l22-9h44l22 9-22 7h-44zM216 526l20-9h38l20 9-18 8h-42zM128 290q8-12 24-10l-4 16-8 10zM360 282q18-6 24 10l-8 12-16-6zM130 470q6-10 16-6l14 18-8 8-20-6zM362 470q10-12 22-4v16l-20 6-8-10z" fill="#e60c08"/>
          <path d="M98 68h315v24h-61v200l-9-14-8 6q-16-32-16-68V92H194v124q-2 40-16 70l-7-8-10 6V92H98z" class="pile"/>
          <path d="M160 718V476l10 10 7-6q16 20 16 62v176zM319 718V542q2-42 16-60l8 6 9-14v244z" class="pile"/>
          <path d="M159 290l6-12 6 8 8-10 4 8M334 284l4-6 6 8 5-10 4 14M159 470l8 14 5-8 6 12M335 486l5-12 5 10 8-12" fill="none" stroke="#d84c20" stroke-width="5"/>
          <path d="M194 400v30l7-7 6 12 6-3-6-11h9z" fill="#fff" stroke="#333" stroke-width="2"/>
        </g>
        <rect x="165.500" y="97.500" width="84" height="139" class="frame"/>
        <text x="172" y="113" class="lg-title">DENSITYVAVG</text>
        <text x="172" y="121" class="lg-title">(Avg: 100%)</text>
        <g transform="translate(173 128)">
          <path d="M0 0h11v7H0z" fill="#ddd"/><path d="M0 7h11v8H0z" fill="#f00000"/><path d="M0 15h11v7H0z" fill="#f06000"/><path d="M0 22h11v7H0z" fill="#eeb800"/><path d="M0 29h11v7H0z" fill="#f4f000"/><path d="M0 36h11v8H0z" fill="#a8f000"/><path d="M0 44h11v7H0z" fill="#38e800"/><path d="M0 51h11v7H0z" fill="#00e83c"/><path d="M0 58h11v7H0z" fill="#00e8a0"/><path d="M0 65h11v8H0z" fill="#00e8ec"/><path d="M0 73h11v7H0z" fill="#00a8f0"/><path d="M0 80h11v7H0z" fill="#0058f0"/><path d="M0 87h11v7H0z" fill="#0000e8"/><path d="M0 94h11v7H0z" fill="#333"/>
          <path d="M0 0h11v101H0zM0 7h15M0 15h15M0 22h15M0 29h15M0 36h15M0 44h15M0 51h15M0 58h15M0 65h15M0 73h15M0 80h15M0 87h15M0 94h15" fill="none" stroke="#e8e8e8" stroke-width=".8"/>
        </g>
        <g class="lg">
          <text x="192" y="138">+2.764e+03</text><text x="192" y="145">+2.534e+03</text><text x="192" y="152">+2.304e+03</text><text x="192" y="160">+2.074e+03</text><text x="192" y="167">+1.843e+03</text><text x="192" y="174">+1.613e+03</text><text x="192" y="181">+1.383e+03</text><text x="192" y="189">+1.153e+03</text><text x="192" y="196">+9.223e+02</text><text x="192" y="203">+6.920e+02</text><text x="192" y="210">+4.617e+02</text><text x="192" y="218">+2.315e+02</text><text x="192" y="225">+1.200e+00</text>
        </g>
        <g class="state"><text x="729" y="104">Step: Step-1   Frame: 64</text><text x="729" y="117">Total Time: 0.006401</text></g>
        <g stroke="#e4f0ff" stroke-width="1.500" fill="none"><path d="M830 155h-25a25 25 0 0 1 25-25z" fill="#067484"/><path d="M830 123v52M811 176h33"/></g>
        <circle cx="830" cy="123" r="3" fill="#fff"/><circle cx="830" cy="176" r="4" fill="#e00000"/>
        <g class="cmp"><text x="795" y="157">z</text><text x="828" y="157">x</text><text x="827" y="116">Y</text></g>
        <g class="triad"><text x="206" y="396">Y</text><text x="174" y="427">Z</text></g>
        <path d="M210.500 423v-12" stroke="#10a010" stroke-width="3"/><path d="M206.500 412l4-10 4 10z" fill="#10b010"/>
        <path d="M210 424h-12" stroke="#0000b8" stroke-width="3"/><path d="M199 420l-11 4 11 4z" fill="#0000b8"/>
        <path d="M207 421l7 6M214 421l-7 6" stroke="#fff" stroke-width="1.500"/><path d="M208 427h5l-2.500-5z" fill="#a01818"/>
      </svg>
    </div>

    <div class="brand">
      <svg viewBox="0 0 16 16"><path d="M6 1h5q2 2-3 5M5 6q5 2 2 6-2 3-6 3 0-5 5-8M15 6q-5-1-4 2 3 2 2 5-2 2-5 1" fill="none" stroke="#2b8c92" stroke-width="1.300"/></svg>
      <span>SIMULIA</span>
    </div>
  </section>
</main>

<footer class="messages">
  <button class="msg" aria-label="Message area"><svg><use href="#note"/></svg></button>
  <div class="log"></div>
  <button class="rec" aria-label="Pause recording"><svg viewBox="0 0 20 20"><path d="M5 5h4v10H5zM11 5h4v10h-4z" fill="#e4e4e4"/></svg></button>
</footer>
</body>
</html>
```
FILE: styles.css
```css
* { box-sizing: border-box; }
html, body { height: 100%; margin: 0; }
body {
  display: flex;
  flex-direction: column;
  overflow: hidden;
  background: #fafafa;
  color: #1c1c1c;
  font: 8px/12px "Liberation Sans", Arial, sans-serif;
}
button, select { font: inherit; color: inherit; }
button {
  display: flex;
  align-items: center;
  justify-content: center;
  margin: 0;
  padding: 0;
  border: 0;
  background: none;
}
svg { display: block; flex: none; }
.defs { position: absolute; width: 0; height: 0; }
.i10 { width: 10px; height: 10px; }

/* Shared glyph styles */
.ax { fill: none; stroke: #182868; stroke-width: 1.5; }
.axf { fill: #182868; }
.axt { font: bold 5px "Liberation Sans", sans-serif; fill: #a04040; }
.la { font: bold 8px "Liberation Serif", serif; fill: #222; }
.lb { font: bold 13px "Liberation Serif", serif; fill: #a01c24; }

/* Title and menus */
.titlebar {
  display: flex;
  align-items: center;
  flex: none;
  gap: 3px;
  height: 15px;
  padding-left: 2px;
  background: #fff;
}
.titlebar h1 { margin: 0; font-size: 8px; font-weight: 400; }
.winctl { display: flex; margin-left: auto; }
.winctl button { width: 30px; height: 14px; }
.winctl svg { width: 7px; height: 7px; fill: none; stroke: #222; stroke-width: 1.3; }
.winctl.small button { width: 13px; }
.winctl.small svg { width: 6px; height: 6px; stroke: #555; }
.menubar {
  display: flex;
  align-items: center;
  flex: none;
  gap: 10px;
  height: 16px;
  padding-left: 3px;
}
.menubar .i10 { margin-right: -3px; }
.menubar .what { font-weight: 700; font-size: 9px; }
.what svg { width: 5px; height: 7px; }
.menubar .winctl { padding-right: 1px; }

/* Toolbars */
.bar {
  display: flex;
  align-items: center;
  flex: none;
  height: 19px;
  border-top: 1px solid #dcdcdc;
  background: #fcfcfc;
}
.bar-field { padding-left: 174px; }
.group { display: flex; }
.group button { width: 17px; height: 17px; }
.group svg { width: 14px; height: 14px; }
.views svg { width: 15px; height: 15px; overflow: visible; }
.group .num { color: #c01818; font: bold 12px/17px "Liberation Sans", sans-serif; }
.on { background: #d4e8f8; }
.grip { flex: none; width: 6px; height: 12px; background: radial-gradient(circle, #999 1px, transparent 1px) center / 3px 3px repeat-y; }
.rule { flex: none; width: 1px; height: 16px; margin: 0 2px; background: #ccc; }
.caret { margin-right: 2px; border: 3px solid transparent; border-top: 4px solid #222; border-bottom: 0; }

/* Drop-downs */
.combo {
  display: block;
  position: relative;
  flex: none;
  height: 15px;
  border: 1px solid #c8c8c8;
  background: #fff;
}
.combo select {
  width: 100%;
  height: 100%;
  padding: 0 9px 0 2px;
  border: 0;
  appearance: none;
  background: none;
}
.combo::after {
  content: "";
  position: absolute;
  top: 3px;
  right: 2px;
  width: 4px;
  height: 4px;
  border: solid #666;
  border-width: 0 1px 1px 0;
  transform: rotate(45deg);
}
.combo::before {
  content: "";
  position: absolute;
  top: 0;
  bottom: 0;
  right: 0;
  width: 8px;
  background: #ececec;
}
.c-primary { width: 50px; }
.c-var { width: 54px; margin-left: 2px; }
.c-comp { width: 54px; margin-right: 3px; }
.c-vis { width: 88px; margin-right: 2px; }
.c-all { width: 69px; background: #cce2f6; border-color: #cce2f6; }
.c-all::before { background: #c3d9ee; }
.c-all::after { border-color: #b4cade; }
.c-ses { width: 39px; }
.spin select { padding-left: 7px; }
.spin { background: linear-gradient(#333, #333) 2px 4px / 2px 2px no-repeat, linear-gradient(#333, #333) 2px 9px / 2px 2px no-repeat, #fff; }
.c-module { width: 70px; margin: 0 9px 0 3px; }
.c-model { width: 150px; margin-left: 3px; }

/* Body */
main { display: flex; flex: 1; min-height: 0; }
.side { display: flex; flex-direction: column; flex: none; width: 110px; padding: 4px 4px 3px 3px; }
.tabs { display: flex; }
.tabs button { width: 32px; height: 16px; border: 1px solid #e6e6e6; border-bottom: 0; background: #f6f6f6; }
.tabs button[aria-selected] { width: 36px; background: #fff; }
.panel { display: flex; flex-direction: column; flex: 1; border: 1px solid #dcdcdc; background: #fff; }
.panel-tools { display: flex; align-items: center; padding-top: 2px; }
.panel-tools button { flex: 1; }
.panel-tools svg { width: 11px; height: 11px; }
.tree { display: grid; grid-auto-rows: 1fr; height: 138px; margin: 4px 0 0; padding: 0; list-style: none; }
.tree li { display: flex; align-items: center; gap: 3px; padding-left: 9px; white-space: nowrap; }
.tree li svg { width: 11px; height: 11px; }
.tree .exp { padding-left: 1px; }
.tree .exp svg { margin-left: -1px; }
.exp::before {
  content: "";
  width: 5px;
  height: 5px;
  border: 1px solid #ccc;
  background: linear-gradient(#888, #888) center / 3px 1px no-repeat, linear-gradient(#888, #888) center / 1px 3px no-repeat;
}
.hscroll { display: flex; align-items: center; gap: 6px; height: 11px; margin-top: auto; padding: 0 4px; }
.thumb { flex: 1; height: 9px; margin-right: 6px; background: #dcdcdc; }
.chev { width: 4px; height: 4px; border: solid #333; border-width: 0 1px 1px 0; transform: rotate(-45deg); }
.chev.left { transform: rotate(135deg); }

.work { display: flex; flex-direction: column; flex: 1; min-width: 0; }
.context { display: flex; align-items: center; flex: none; height: 21px; padding-left: 5px; border-top: 1px solid #e4e4e4; }
.play { display: flex; align-items: center; margin-left: auto; padding-right: 18px; }
.play button { width: 20px; height: 18px; }
.play svg { width: 14px; height: 14px; }
.play .rule { margin: 0 4px; }
.stage { display: flex; flex: 1; min-height: 0; }
.toolbox { flex: none; width: 40px; overflow: hidden; background: #fdfdfd; }
.tools { display: grid; grid-template-columns: 19px 19px; grid-auto-rows: 18px; padding: 2px 1px; border-bottom: 1px solid #ccc; }
.plots { row-gap: 1px; }
.tools button { width: 18px; height: 18px; }
.tools svg { width: 15px; height: 15px; }
.viewport { flex: 1; min-width: 0; height: 100%; }

/* Scene */
.pile { fill: #ebebeb; stroke: #222; stroke-width: 3; }
.frame { fill: none; stroke: #dfe4ea; }
.lg-title { font: 8px "DejaVu Sans", sans-serif; fill: #e8e8e8; }
.lg { font: 7px "DejaVu Sans", sans-serif; fill: #f0f0f0; }
.state { font: 11px "Liberation Mono", monospace; fill: #dca078; }
.state text { white-space: pre; }
.cmp { font: bold 8px "Liberation Mono", monospace; fill: #d8e040; }
.triad { font: 12px "Liberation Sans", sans-serif; fill: #f4f4f4; }

/* Footer */
.brand { display: flex; align-items: center; justify-content: flex-end; flex: none; gap: 1px; height: 25px; padding-right: 2px; }
.brand svg { width: 16px; height: 16px; }
.brand span { color: #2b8c92; font: italic 12px/14px "DejaVu Sans", sans-serif; }
.messages { display: flex; flex: none; height: 24px; border-top: 1px solid #d0d0d0; border-bottom: 2px solid #333; background: #fff; }
.msg { width: 27px; border-right: 1px solid #ddd; }
.msg svg { width: 13px; height: 13px; }
.log { flex: 1; border-bottom: 1px solid #ccc; }
.rec { width: 20px; height: 20px; margin-right: 4px; background: #2c2c2c; }
.rec svg { width: 20px; height: 20px; }
```
